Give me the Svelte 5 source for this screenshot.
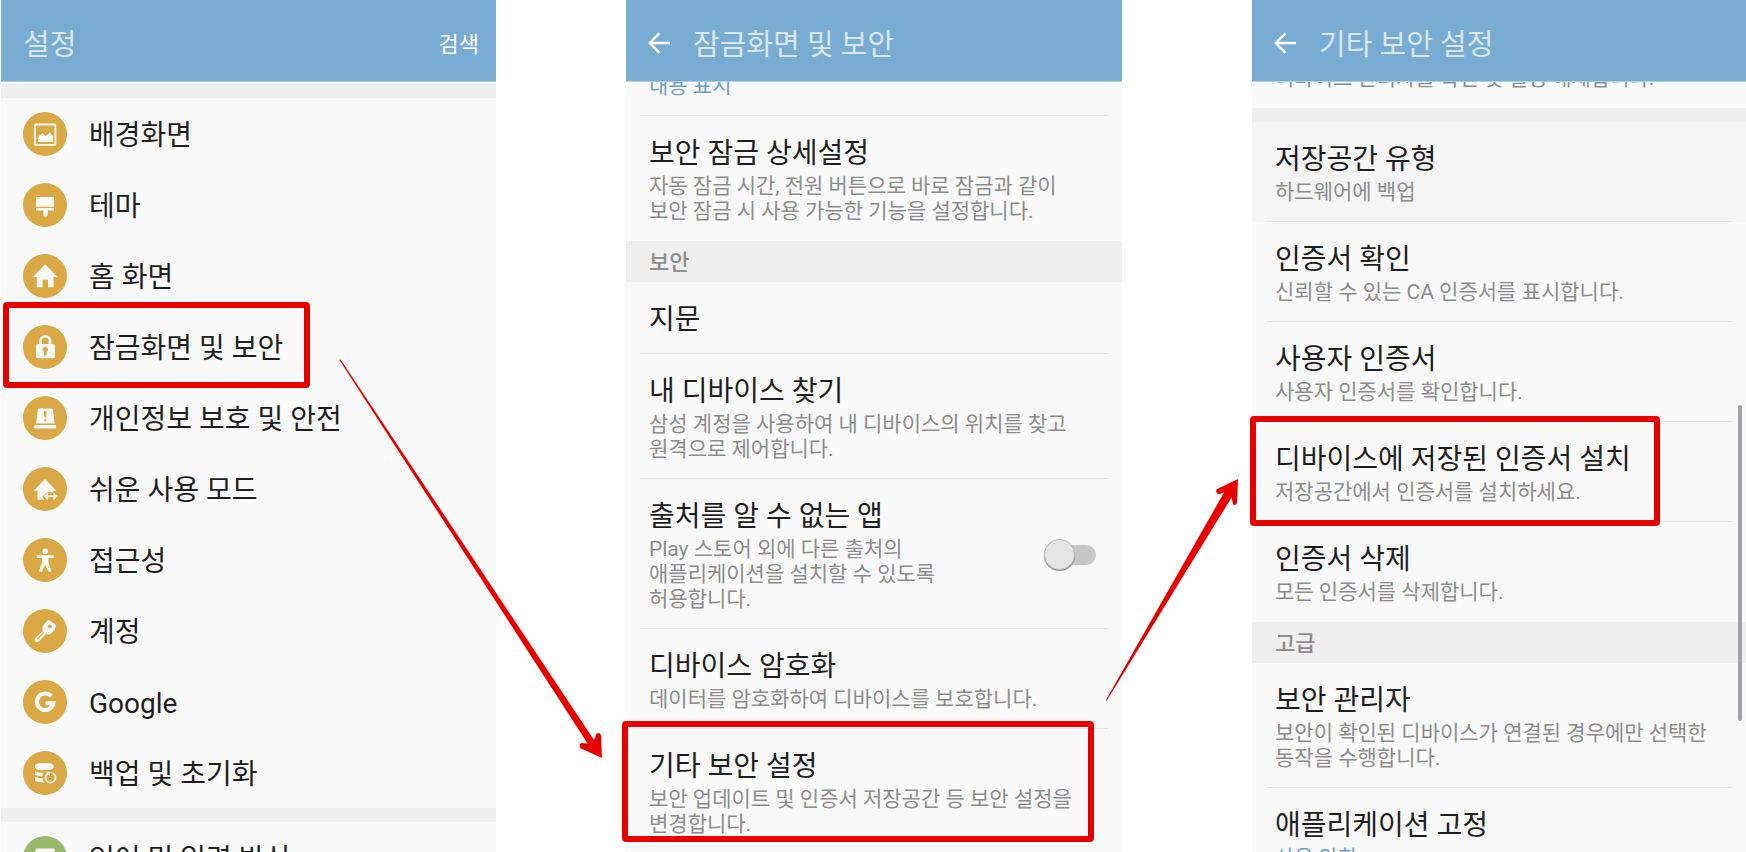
<script lang="ts">
	type Menu = { icon: string; label: string };
	type Item = { title: string; summary?: string; toggle?: boolean; muted?: boolean; accent?: boolean };
	type Group = { heading?: string; items: Item[] };

	// ── screen 1: settings menu ──────────────────────────────────────────────
	const MENU: Menu[] = [
		{ icon: 'wallpaper', label: '배경화면' },
		{ icon: 'theme', label: '테마' },
		{ icon: 'home', label: '홈 화면' },
		{ icon: 'lock', label: '잠금화면 및 보안' },
		{ icon: 'privacy', label: '개인정보 보호 및 안전' },
		{ icon: 'easy', label: '쉬운 사용 모드' },
		{ icon: 'access', label: '접근성' },
		{ icon: 'key', label: '계정' },
		{ icon: 'google', label: 'Google' },
		{ icon: 'backup', label: '백업 및 초기화' }
	];

	// ── screen 2: lock screen and security ───────────────────────────────────
	const SECURITY: Group[] = [
		{
			items: [
				{
					title: '보안 잠금 상세설정',
					summary: '자동 잠금 시간, 전원 버튼으로 바로 잠금과 같이\n보안 잠금 시 사용 가능한 기능을 설정합니다.'
				}
			]
		},
		{
			heading: '보안',
			items: [
				{ title: '지문' },
				{
					title: '내 디바이스 찾기',
					summary: '삼성 계정을 사용하여 내 디바이스의 위치를 찾고\n원격으로 제어합니다.'
				},
				{
					title: '출처를 알 수 없는 앱',
					summary: 'Play 스토어 외에 다른 출처의\n애플리케이션을 설치할 수 있도록\n허용합니다.',
					toggle: true
				},
				{ title: '디바이스 암호화', summary: '데이터를 암호화하여 디바이스를 보호합니다.' },
				{
					title: '기타 보안 설정',
					summary: '보안 업데이트 및 인증서 저장공간 등 보안 설정을\n변경합니다.'
				}
			]
		}
	];

	// ── screen 3: other security settings ────────────────────────────────────
	const OTHER: Group[] = [
		{
			items: [
				{ title: '저장공간 유형', summary: '하드웨어에 백업', muted: true },
				{ title: '인증서 확인', summary: '신뢰할 수 있는 CA 인증서를 표시합니다.' },
				{ title: '사용자 인증서', summary: '사용자 인증서를 확인합니다.' },
				{ title: '디바이스에 저장된 인증서 설치', summary: '저장공간에서 인증서를 설치하세요.' },
				{ title: '인증서 삭제', summary: '모든 인증서를 삭제합니다.' }
			]
		},
		{
			heading: '고급',
			items: [
				{
					title: '보안 관리자',
					summary: '보안이 확인된 디바이스가 연결된 경우에만 선택한\n동작을 수행합니다.'
				},
				{ title: '애플리케이션 고정', summary: '사용 안함', accent: true }
			]
		}
	];

	let unknownSources = $state(false);
</script>

{#snippet glyph(name: string)}
	<svg class="icon" class:green={name === 'keyboard'} viewBox="0 0 44 44" aria-hidden="true">
		<circle class="disc" cx="22" cy="22" r="22" />
		{#if name === 'wallpaper'}
			<rect class="line" x="12" y="12.5" width="20.4" height="20.4" rx="1" stroke-width="1.8" />
			<path d="M15 30v-5l4.5-4 3 3.2 4.5-4 3.2 4V30z" />
		{:else if name === 'theme'}
			<path d="M13 14h18v9.7H13zM13 25h18v2.6h-6.3v4a2.1 2.1 0 0 1-4.3 0v-4H13z" />
		{:else if name === 'home'}
			<path d="M22.2 10.2 34.6 23h-4v9q0 1.2-1.2 1.2H25v-7.4h-5.4v7.4H15q-1.2 0-1.2-1.2v-9h-4z" />
		{:else if name === 'lock'}
			<path class="line" d="M17.5 20v-4a4.8 4.8 0 0 1 9.6 0v4" stroke-width="2.6" />
			<rect x="13" y="19" width="18.8" height="14.3" rx="1.6" />
			<path class="cut" d="M20.9 26.6a2.6 2.6 0 1 1 2.8 0V30q-1.4 2-2.8 0z" />
		{:else if name === 'privacy'}
			<path d="M16 12.6h12.6q1.2 0 1.4 1.2l1.6 13.6H13.2l1.6-13.6q.2-1.2 1.2-1.2zM11.4 29h21.8v3.4H11.4z" />
			<path class="cut" d="M20.8 15h3l-.6 6.6h-1.8zM21.2 23h2.2v2.2h-2.2z" />
		{:else if name === 'easy'}
			<path d="M22 12 33.4 23.8H30.6v1.4H24.6L19.4 29.6l2 3.1H15.4q-1 0-1-1v-7.9h-3.8z" />
			<path class="line" d="M23 29.3h9" stroke-width="1.8" />
			<path d="m20.6 29.3 4.4-3.8v7.6zM34.9 29.3l-4.4-3.8v7.6z" />
		{:else if name === 'access'}
			<circle cx="22.2" cy="13.2" r="2.8" />
			<path d="M13.8 17.3h17V20h-5.4v4.4l3 8.8-2.8.8-3.4-7.4-3.4 7.4-2.8-.8 3-8.8V20h-5.2z" />
		{:else if name === 'key'}
			<path d="M24.5 11.4q1-.6 2 0l5.6 3.8q.8.7.7 1.6l-.8 3.6-5 4.8q-1 .7-2 .2l-1.8-.6-7.8 8q-1.8 1-3.2-.6-1-1.6.2-3l7.4-7-.6-2.4.8-3.4z" />
			<circle class="cut" cx="26.8" cy="17.4" r="2" />
			<path class="cut" d="m13.6 29.8 6.8-6.6.8.8-6.8 6.6z" />
		{:else if name === 'google'}
			<path class="line" d="M28.4 16.2A8.3 8.3 0 1 0 30.4 23.2H22.6" stroke-width="4" />
		{:else if name === 'backup'}
			<rect x="11.8" y="12.3" width="19" height="6.6" rx="5" ry="3.2" />
			<path d="M12 20.4q4.6 1.4 8.6 1.2-1.2 1.6-1.4 3.6-4.4 0-7.2-1.4zM12 26q3.6 1.4 7.4 1.4.4 2 1.8 4-5.8.2-9.2-1.4z" />
			<path class="line" d="M25.2 22.2a5 5 0 1 0 4.6 0" stroke-width="1.7" />
			<path d="m23 20.8 4.4.2-.6 4z" />
		{:else}
			<path d="M14 12.4h16q1.6 0 1.6 1.6v14H12.4V14q0-1.6 1.6-1.6z" />
		{/if}
	</svg>
{/snippet}

{#snippet entry(m: Menu)}
	<a class="entry" href="#top">
		{@render glyph(m.icon)}
		<span class="label">{m.label}</span>
	</a>
{/snippet}

{#snippet bar(title: string)}
	<header class="bar">
		<button class="back" aria-label="뒤로">
			<svg viewBox="0 0 22 22" aria-hidden="true"><path d="M11.5 1.2 1.8 11l9.7 9.8M2 11h20" /></svg>
		</button>
		<h2>{title}</h2>
	</header>
{/snippet}

{#snippet text(item: Item)}
	<span class="text">
		<span class="title">{item.title}</span>
		{#if item.summary}
			<span class="summary" class:accent={item.accent}>{item.summary}</span>
		{/if}
	</span>
{/snippet}

{#snippet groups(list: Group[])}
	{#each list as group}
		{#if group.heading}
			<h3 class="heading">{group.heading}</h3>
		{/if}
		<ul>
			{#each group.items as item}
				<li class:muted={item.muted}>
					{#if item.toggle}
						<label class="item">
							{@render text(item)}
							<input class="switch" type="checkbox" bind:checked={unknownSources} />
						</label>
					{:else}
						<a class="item" class:plain={!item.summary} href="#top">{@render text(item)}</a>
					{/if}
				</li>
			{/each}
		</ul>
	{/each}
{/snippet}

<main class="board" id="top">
	<section class="screen">
		<header class="bar">
			<h2>설정</h2>
			<button class="search">검색</button>
		</header>
		<div class="body menu">
			<div class="band"></div>
			<nav>
				{#each MENU as m}
					{@render entry(m)}
				{/each}
			</nav>
			<div class="band"></div>
			<nav>
				{@render entry({ icon: 'keyboard', label: '언어 및 입력 방식' })}
			</nav>
		</div>
	</section>

	<section class="screen">
		{@render bar('잠금화면 및 보안')}
		<div class="body">
			<!-- scrolled partly under the bar -->
			<div class="item tail security"><span class="summary accent">내용 표시</span></div>
			{@render groups(SECURITY)}
		</div>
	</section>

	<section class="screen">
		{@render bar('기타 보안 설정')}
		<div class="body">
			<div class="item tail other">
				<span class="summary">디바이스 관리자를 확인 및 설정 해제합니다.</span>
			</div>
			<div class="band"></div>
			{@render groups(OTHER)}
			<span class="scrollbar"></span>
		</div>
	</section>

	<!-- step markers -->
	<svg class="marks" viewBox="0 0 1746 852" aria-hidden="true">
		<rect x="6" y="305" width="301" height="80" rx="1" />
		<rect x="625" y="724" width="466" height="115" rx="1" />
		<rect x="1253" y="419" width="404" height="104" rx="1" />
		<path d="M339.4 360 340.6 359.4 594 740l2.4-6q2.6-2.4 4.6 1l1 23-21-9.5q-3-3.5 0-5.5l6.6.4z" />
		<path d="M1105.6 700.4 1224 492.6l-5 1.6q-4-1-2.4-5l21.4-10.2-1 24q-1.6 3.4-4 1l-1.4-6.6L1106.8 700.6z" />
	</svg>
</main>

<style>
	:global(body) {
		margin: 0;
		background: #fff;
	}

	.board {
		position: relative;
		display: grid;
		grid-template-columns: 495fr 496fr 494fr;
		column-gap: 130px;
		height: 100vh;
		padding-left: 1px;
		box-sizing: border-box;
		overflow: hidden;
		font-family: Roboto, 'Noto Sans CJK KR', sans-serif;
		color: #1e1e1e;
	}

	.screen {
		display: flex;
		flex-direction: column;
		min-width: 0;
		min-height: 0;
		background: #fafafa;
	}

	h2,
	h3,
	ul {
		margin: 0;
		padding: 0;
		font-weight: 400;
		list-style: none;
	}

	a {
		color: inherit;
		text-decoration: none;
	}

	button {
		padding: 0;
		border: none;
		background: none;
		font: inherit;
		color: #fff;
	}

	/* ── title bar ── */
	.bar {
		display: flex;
		align-items: center;
		flex-shrink: 0;
		gap: 23px;
		padding: 4px 17px 0 22px;
		height: 77px;
		background: #78acd2;
		border-bottom: 1px solid #b5cfe2;
	}

	.bar h2 {
		flex: 1;
		padding-top: 4px;
		font-size: 29px;
		line-height: 40px;
		color: #d9e7f2;
	}

	.back {
		width: 22px;
		height: 22px;
	}

	.back svg {
		display: block;
		fill: none;
		stroke: #fff;
		stroke-width: 2.4;
	}

	.search {
		padding-top: 4px;
		font-size: 22px;
		line-height: 30px;
	}

	/* ── scrolling body ── */
	.body {
		position: relative;
		flex: 1;
		min-height: 0;
		overflow: hidden;
	}

	.menu {
		padding-top: 2px;
	}

	.band {
		height: 14px;
		background: #efefef;
	}

	.entry {
		display: flex;
		align-items: center;
		gap: 22px;
		height: 71px;
		padding: 0 22px;
	}

	.label {
		padding-top: 4px;
		font-size: 28px;
		line-height: 40px;
	}

	.icon {
		flex-shrink: 0;
		width: 44px;
		height: 44px;
		fill: #fbfaf7;
	}

	.icon .disc,
	.icon .cut {
		fill: #daa945;
	}

	.icon.green .disc {
		fill: #99b96b;
	}

	.icon .line {
		fill: none;
		stroke: #fbfaf7;
	}

	/* ── list items ── */
	.item {
		display: flex;
		align-items: center;
		justify-content: space-between;
		margin: 0 14px;
		padding: 18px 12px 16px 9px;
		border-bottom: 1px solid #e6e6e6;
	}

	.item.plain {
		padding-bottom: 13px;
	}

	.item.tail {
		padding-top: 0;
	}

	.security {
		margin-top: -8px;
	}

	.other {
		margin-top: -16px;
		border-color: transparent;
	}

	li:last-child .item {
		border-color: transparent;
	}

	.muted {
		background: #f5f5f5;
	}

	.title,
	.summary {
		display: block;
		white-space: pre;
	}

	.title {
		font-size: 28px;
		line-height: 40px;
	}

	.summary {
		font-size: 21px;
		line-height: 25px;
		color: #8c8c8c;
	}

	.summary.accent {
		color: #6c9fc2;
	}

	.heading {
		padding: 2px 22px 0 23px;
		background: #efefef;
		font-size: 22px;
		font-weight: 500;
		line-height: 39px;
		color: #8c8c8c;
	}

	/* ── switch ── */
	.switch {
		position: relative;
		display: flex;
		flex-shrink: 0;
		align-items: center;
		width: 52px;
		height: 32px;
		margin: 0;
		appearance: none;
	}

	.switch::before {
		content: '';
		flex: 1;
		height: 20px;
		margin-left: 12px;
		border-radius: 10px;
		background: #c7c7c7;
	}

	.switch::after {
		content: '';
		position: absolute;
		left: 0;
		width: 31px;
		height: 31px;
		border: 1px solid #bdbdbd;
		border-radius: 50%;
		background: #e4e4e4;
		box-shadow: 0 1px 1px #8c8c8c;
		box-sizing: border-box;
	}

	.switch:checked::after {
		left: 21px;
		background: #78acd2;
	}

	.scrollbar {
		position: absolute;
		top: 42%;
		right: 4px;
		width: 4px;
		height: 41%;
		border-radius: 2px;
		background: #a0a2a6;
	}

	/* ── step markers ── */
	.marks {
		position: absolute;
		top: 0;
		left: 0;
		width: 100%;
		pointer-events: none;
		fill: #e60000;
	}

	.marks rect {
		fill: none;
		stroke: #e60000;
		stroke-width: 6;
		stroke-linejoin: round;
	}
</style>
